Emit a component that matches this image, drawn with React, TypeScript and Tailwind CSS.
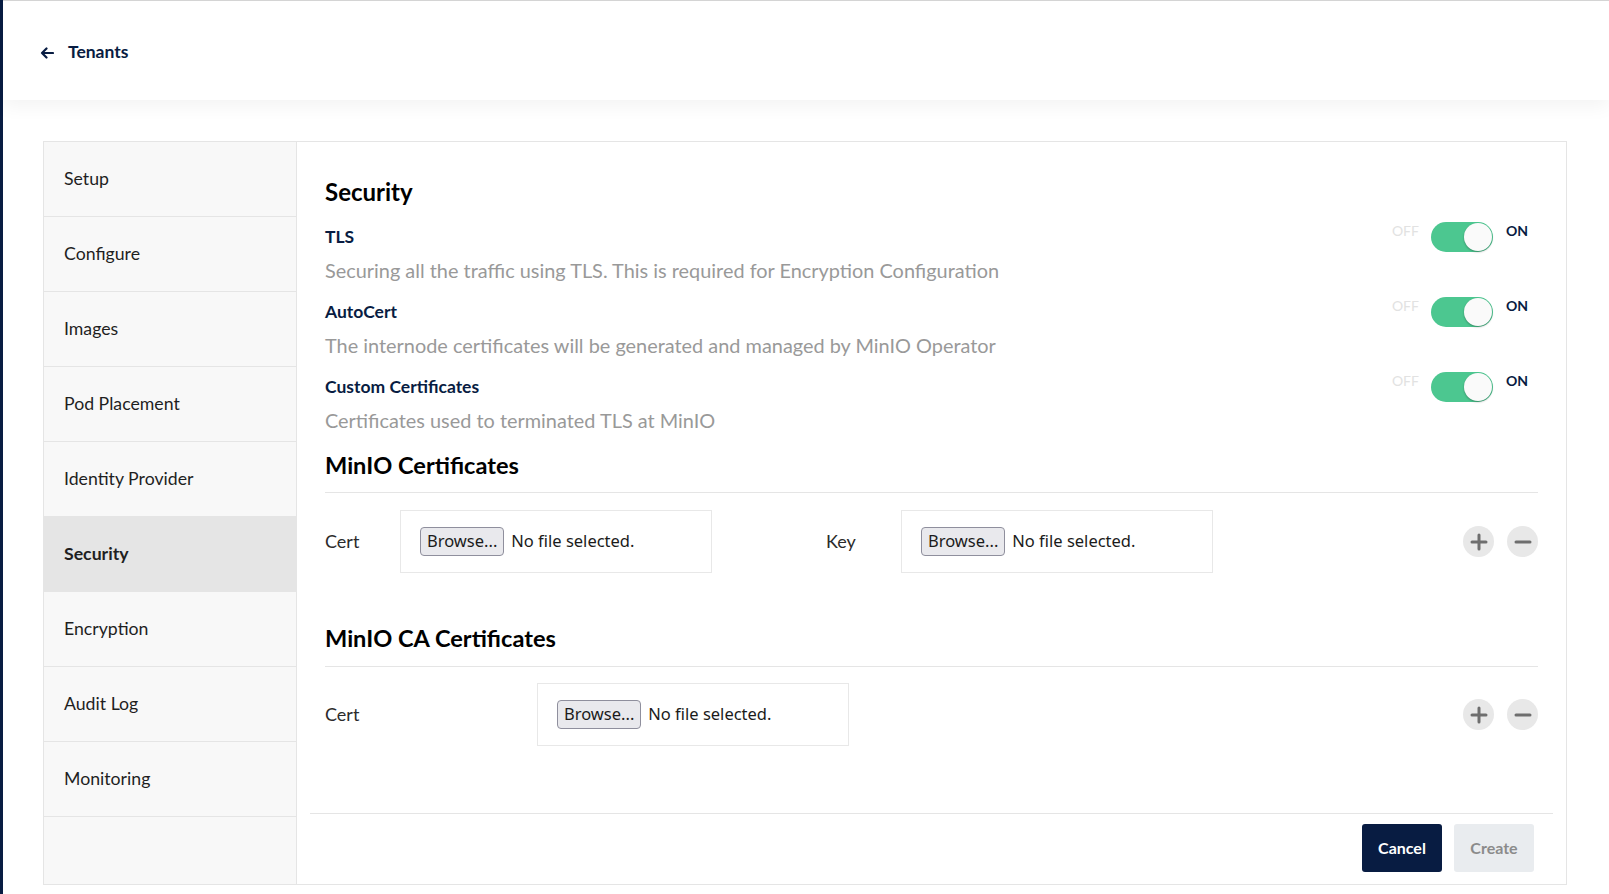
import React from 'react';

const steps = [
  'Setup',
  'Configure',
  'Images',
  'Pod Placement',
  'Identity Provider',
  'Security',
  'Encryption',
  'Audit Log',
  'Monitoring',
];

const switches = [
  { label: 'TLS', desc: 'Securing all the traffic using TLS. This is required for Encryption Configuration' },
  { label: 'AutoCert', desc: 'The internode certificates will be generated and managed by MinIO Operator' },
  { label: 'Custom Certificates', desc: 'Certificates used to terminated TLS at MinIO' },
];

const Toggle: React.FC = () => (
  <div className="flex items-center mr-[10px]">
    <span className="mb-[14px] text-[14px] text-[#e2e2e2] w-[28px]">OFF</span>
    <div className="ml-[11px] w-[62px] h-[30px] rounded-full bg-[#4cc790] flex items-center justify-end pr-[1px]">
      <div className="w-[28px] h-[28px] rounded-full bg-[#fafafa] shadow-[0_1px_2px_rgba(0,0,0,0.3)]" />
    </div>
    <span className="mb-[14px] ml-[13px] text-[14px] font-bold text-[#081c42]">ON</span>
  </div>
);

const FileBox: React.FC = () => (
  <div className="w-[312px] h-[63px] border border-[#e8e8e8] flex items-center pl-[19px] gap-[7px] font-['Noto_Sans',sans-serif] text-[16.5px]">
    <span className="h-[29px] px-[6px] flex items-center bg-[#e9e9ed] border border-[#8f8f9d] rounded-[4px] text-[#1b1b1b]">
      Browse...
    </span>
    <span className="text-[#1b1b1b]">No file selected.</span>
  </div>
);

const RoundBtn: React.FC<{ plus?: boolean }> = ({ plus }) => (
  <div className="w-[31px] h-[31px] rounded-full bg-[#e8e8e8] flex items-center justify-center">
    <svg width="18" height="18" viewBox="0 0 18 18">
      <line x1="2" y1="9" x2="16" y2="9" stroke="#6e6e6e" strokeWidth="3" strokeLinecap="round" />
      {plus && <line x1="9" y1="2" x2="9" y2="16" stroke="#6e6e6e" strokeWidth="3" strokeLinecap="round" />}
    </svg>
  </div>
);

export default function App() {
  return (
    <div className="min-h-screen w-full bg-white border-l-[3px] border-[#081c42] font-['Lato',sans-serif]">
      {/* header */}
      <header className="h-[100px] border-t border-[#d4d4d4] bg-white shadow-[0_6px_18px_rgba(0,0,0,0.05)] flex items-center pl-[37px] relative z-10">
        <div className="flex items-center gap-[14px] mt-[4px]">
          <svg width="14" height="12" viewBox="0 0 14 12">
            <path d="M13 6H2M6.5 1.5L2 6l4.5 4.5" fill="none" stroke="#081c42" strokeWidth="2.2" strokeLinecap="round" strokeLinejoin="round" />
          </svg>
          <span className="text-[17.5px] font-bold text-[#081c42]">Tenants</span>
        </div>
      </header>

      {/* wizard panel */}
      <div className="pt-[41px] pl-[40px] pr-[42px]">
        <div className="flex h-[744px] border border-[#e5e5e5]">
          <nav className="w-[253px] shrink-0 bg-[#f8f8f8] border-r border-[#e5e5e5] flex flex-col">
            {steps.map((s) => (
              <div
                key={s}
                className={`h-[75px] shrink-0 border-b border-[#e5e5e5] flex items-center pl-[20px] text-[17.7px] text-[#1f1f1f] ${
                  s === 'Security' ? 'bg-[#e5e5e5] font-bold' : ''
                }`}
              >
                {s}
              </div>
            ))}
          </nav>

          <main className="flex-1 flex flex-col min-w-0">
            <div className="px-[28px] pt-[35px]">
              <h2 className="text-[24px] leading-[30px] font-bold text-[#000]">Security</h2>

              <div className="mt-[20px]">
                {switches.map((sw) => (
                  <div key={sw.label} className="pb-[21px]">
                    <div className="h-[20px] flex items-center justify-between">
                      <span className="text-[17.5px] leading-[20px] font-bold text-[#081c42]">{sw.label}</span>
                      <Toggle />
                    </div>
                    <p className="mt-[12px] text-[19.9px] leading-[22px] text-[#999999]">{sw.desc}</p>
                  </div>
                ))}
              </div>

              <h3 className="-mt-[2px] text-[23.6px] leading-[30px] font-bold text-[#000]">MinIO Certificates</h3>
              <div className="mt-[12px] border-t border-[#e5e5e5]" />
              <div className="mt-[17px] flex items-center text-[18px] text-[#2b2b2b]">
                <div className="w-[501px] flex items-center">
                  <span className="w-[75px]">Cert</span>
                  <FileBox />
                </div>
                <div className="flex items-center">
                  <span className="w-[75px]">Key</span>
                  <FileBox />
                </div>
                <div className="ml-auto flex items-center gap-[13px]">
                  <RoundBtn plus />
                  <RoundBtn />
                </div>
              </div>

              <h3 className="mt-[50px] text-[23.6px] leading-[30px] font-bold text-[#000]">MinIO CA Certificates</h3>
              <div className="mt-[13px] border-t border-[#e5e5e5]" />
              <div className="mt-[16px] flex items-center text-[18px] text-[#2b2b2b]">
                <span className="w-[212px]">Cert</span>
                <FileBox />
                <div className="ml-auto flex items-center gap-[13px]">
                  <RoundBtn plus />
                  <RoundBtn />
                </div>
              </div>
            </div>

            <div className="mt-auto mx-[13px] border-t border-[#e5e5e5] pt-[10px] pb-[12px] pr-[19px] flex justify-end gap-[12px]">
              <button className="w-[80px] h-[48px] rounded-[3px] bg-[#081c42] text-white text-[16px] font-bold">Cancel</button>
              <button className="w-[80px] h-[48px] rounded-[3px] bg-[#e9ecef] text-[#8b8b8b] text-[16px] font-bold">Create</button>
            </div>
          </main>
        </div>
      </div>
    </div>
  );
}
